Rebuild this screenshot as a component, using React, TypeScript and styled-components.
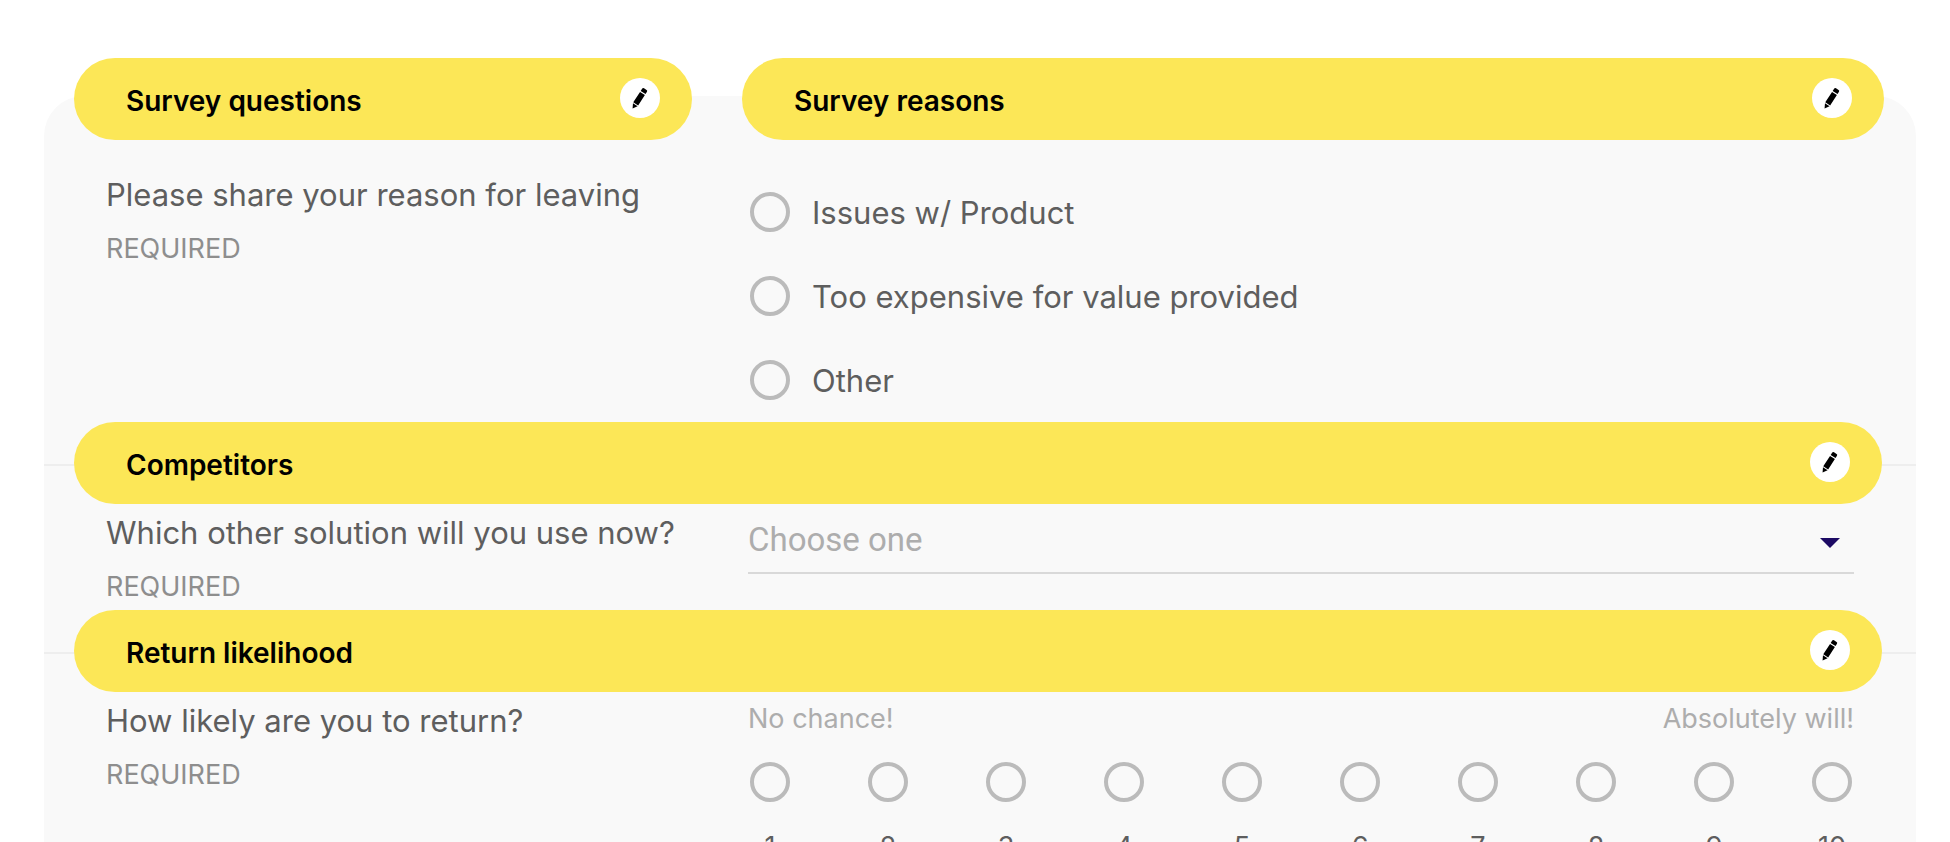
import React from "react";
import styled, { createGlobalStyle } from "styled-components";

const GlobalStyle = createGlobalStyle`
  *, *::before, *::after { box-sizing: border-box; }
  body { margin: 0; background: #fff; }
`;

const Page = styled.main`
  display: flex;
  flex-direction: column;
  height: 100vh;
  overflow: hidden;
  padding: 96px 34px 0 44px;
  font-family: Inter, "Liberation Sans", sans-serif;
  color: #5e5e5e;
`;

const Card = styled.form`
  flex: 1 0 auto;
  background: #f9f9f9;
  border-radius: 40px 40px 0 0;
`;

const TopHeaders = styled.div`
  display: grid;
  grid-template-columns: 618fr 1142fr;
  gap: 50px;
  margin: -38px 32px 0 30px;
`;

const DividedHeader = styled.div`
  padding: 0 34px 0 30px;
  background: linear-gradient(#eee, #eee) 0 42px / 100% 2px no-repeat;
`;

const Pill = styled.header`
  display: flex;
  align-items: flex-start;
  justify-content: space-between;
  height: 82px;
  padding: 20px 32px 0 52px;
  border-radius: 41px;
  background: #fce757;
`;

const PillTitle = styled.h2`
  margin: 0;
  font-size: 28px;
  line-height: 46px;
  font-weight: 600;
  color: #000;
`;

const EditButton = styled.button`
  width: 40px;
  height: 40px;
  padding: 0;
  border: 0;
  border-radius: 50%;
  background: #fff;
  cursor: pointer;

  svg { display: block; }
`;

const Body = styled.section<{ $roomy?: boolean }>`
  display: grid;
  grid-template-columns: 642fr 1106fr;
  padding: ${(p) => (p.$roomy ? "34px 62px 21px" : "8px 62px 5px")};
`;

const Question = styled.h3`
  margin: 0;
  font-size: 31px;
  line-height: 42px;
  font-weight: 400;
`;

const Required = styled.p`
  margin: 15px 0 0;
  font-size: 27px;
  line-height: 36px;
  color: #8e8e8e;
`;

const Options = styled.div`
  display: flex;
  flex-direction: column;
  gap: 42px;
  padding: 17px 2px 0;
`;

const Option = styled.label`
  display: flex;
  align-items: flex-start;
  gap: 22px;
  padding-top: 1px;
  font-size: 31px;
  line-height: 41px;
`;

const Radio = styled.input.attrs({ type: "radio" })`
  appearance: none;
  flex: none;
  width: 40px;
  height: 40px;
  margin: 0;
  border: 4px solid #bbb;
  border-radius: 50%;

  &:checked { background: radial-gradient(#1c0a64 0 45%, transparent 50%); }
`;

const SelectField = styled.div`
  display: grid;
  grid-template-columns: 1fr auto;
  align-items: center;
  align-self: start;
  height: 62px;
  border-bottom: 2px solid #d9d9d9;

  svg { grid-area: 1 / 2; margin: 2px 14px 0 0; pointer-events: none; }
`;

const Select = styled.select`
  grid-area: 1 / 1 / 2 / 3;
  appearance: none;
  width: 100%;
  height: 52px;
  margin-bottom: 6px;
  padding: 0;
  border: 0;
  background: transparent;
  font-family: Roboto, sans-serif;
  font-size: 33px;
  color: #adadad;
`;

const ScaleEnds = styled.div`
  display: flex;
  justify-content: space-between;
  margin-bottom: 24px;
  font-size: 27px;
  line-height: 38px;
  color: #adadad;
`;

const Scale = styled.div`
  display: flex;
  justify-content: space-between;
  padding: 0 2px;
`;

const ScalePoint = styled.label`
  display: flex;
  flex-direction: column;
  align-items: center;
  gap: 27px;
  width: 40px;
  font-size: 27px;
  line-height: 36px;
`;

function Header({ title }: { title: string }) {
  return (
    <Pill>
      <PillTitle>{title}</PillTitle>
      <EditButton type="button" aria-label={`Edit ${title}`}>
        <svg width="40" height="40" viewBox="0 0 40 40" aria-hidden="true">
          <g transform="translate(12.4 30.4) rotate(33)">
            <path d="M0.2 0 L-2.3 -4.6 H3.2 Z M-2.6 -5.6 H3.2 V-18 H-2.6 Z M-2.6 -19.2 H3.2 V-21.8 Q3.2 -23.2 1.8 -23.2 H-1.2 Q-2.6 -23.2 -2.6 -21.8 Z" />
          </g>
        </svg>
      </EditButton>
    </Pill>
  );
}

function Prompt({ id, text }: { id: string; text: string }) {
  return (
    <div>
      <Question id={id}>{text}</Question>
      <Required>REQUIRED</Required>
    </div>
  );
}

const reasons = ["Issues w/ Product", "Too expensive for value provided", "Other"];
const scores = [1, 2, 3, 4, 5, 6, 7, 8, 9, 10];

export default function App() {
  return (
    <Page>
      <GlobalStyle />
      <Card>
        <TopHeaders>
          <Header title="Survey questions" />
          <Header title="Survey reasons" />
        </TopHeaders>
        <Body $roomy>
          <Prompt id="reason" text="Please share your reason for leaving" />
          <Options role="radiogroup" aria-labelledby="reason">
            {reasons.map((reason) => (
              <Option key={reason}>
                <Radio name="reason" value={reason} />
                {reason}
              </Option>
            ))}
          </Options>
        </Body>
        <DividedHeader>
          <Header title="Competitors" />
        </DividedHeader>
        <Body>
          <Prompt id="competitor" text="Which other solution will you use now?" />
          <SelectField>
            <Select aria-labelledby="competitor" defaultValue="">
              <option value="">Choose one</option>
            </Select>
            <svg width="20" height="10" viewBox="0 0 20 10" aria-hidden="true">
              <path d="M0 0 H20 L10 10 Z" fill="#1c0a64" />
            </svg>
          </SelectField>
        </Body>
        <DividedHeader>
          <Header title="Return likelihood" />
        </DividedHeader>
        <Body>
          <Prompt id="likelihood" text="How likely are you to return?" />
          <div role="radiogroup" aria-labelledby="likelihood">
            <ScaleEnds>
              <span>No chance!</span>
              <span>Absolutely will!</span>
            </ScaleEnds>
            <Scale>
              {scores.map((score) => (
                <ScalePoint key={score}>
                  <Radio name="likelihood" value={score} />
                  {score}
                </ScalePoint>
              ))}
            </Scale>
          </div>
        </Body>
      </Card>
    </Page>
  );
}
